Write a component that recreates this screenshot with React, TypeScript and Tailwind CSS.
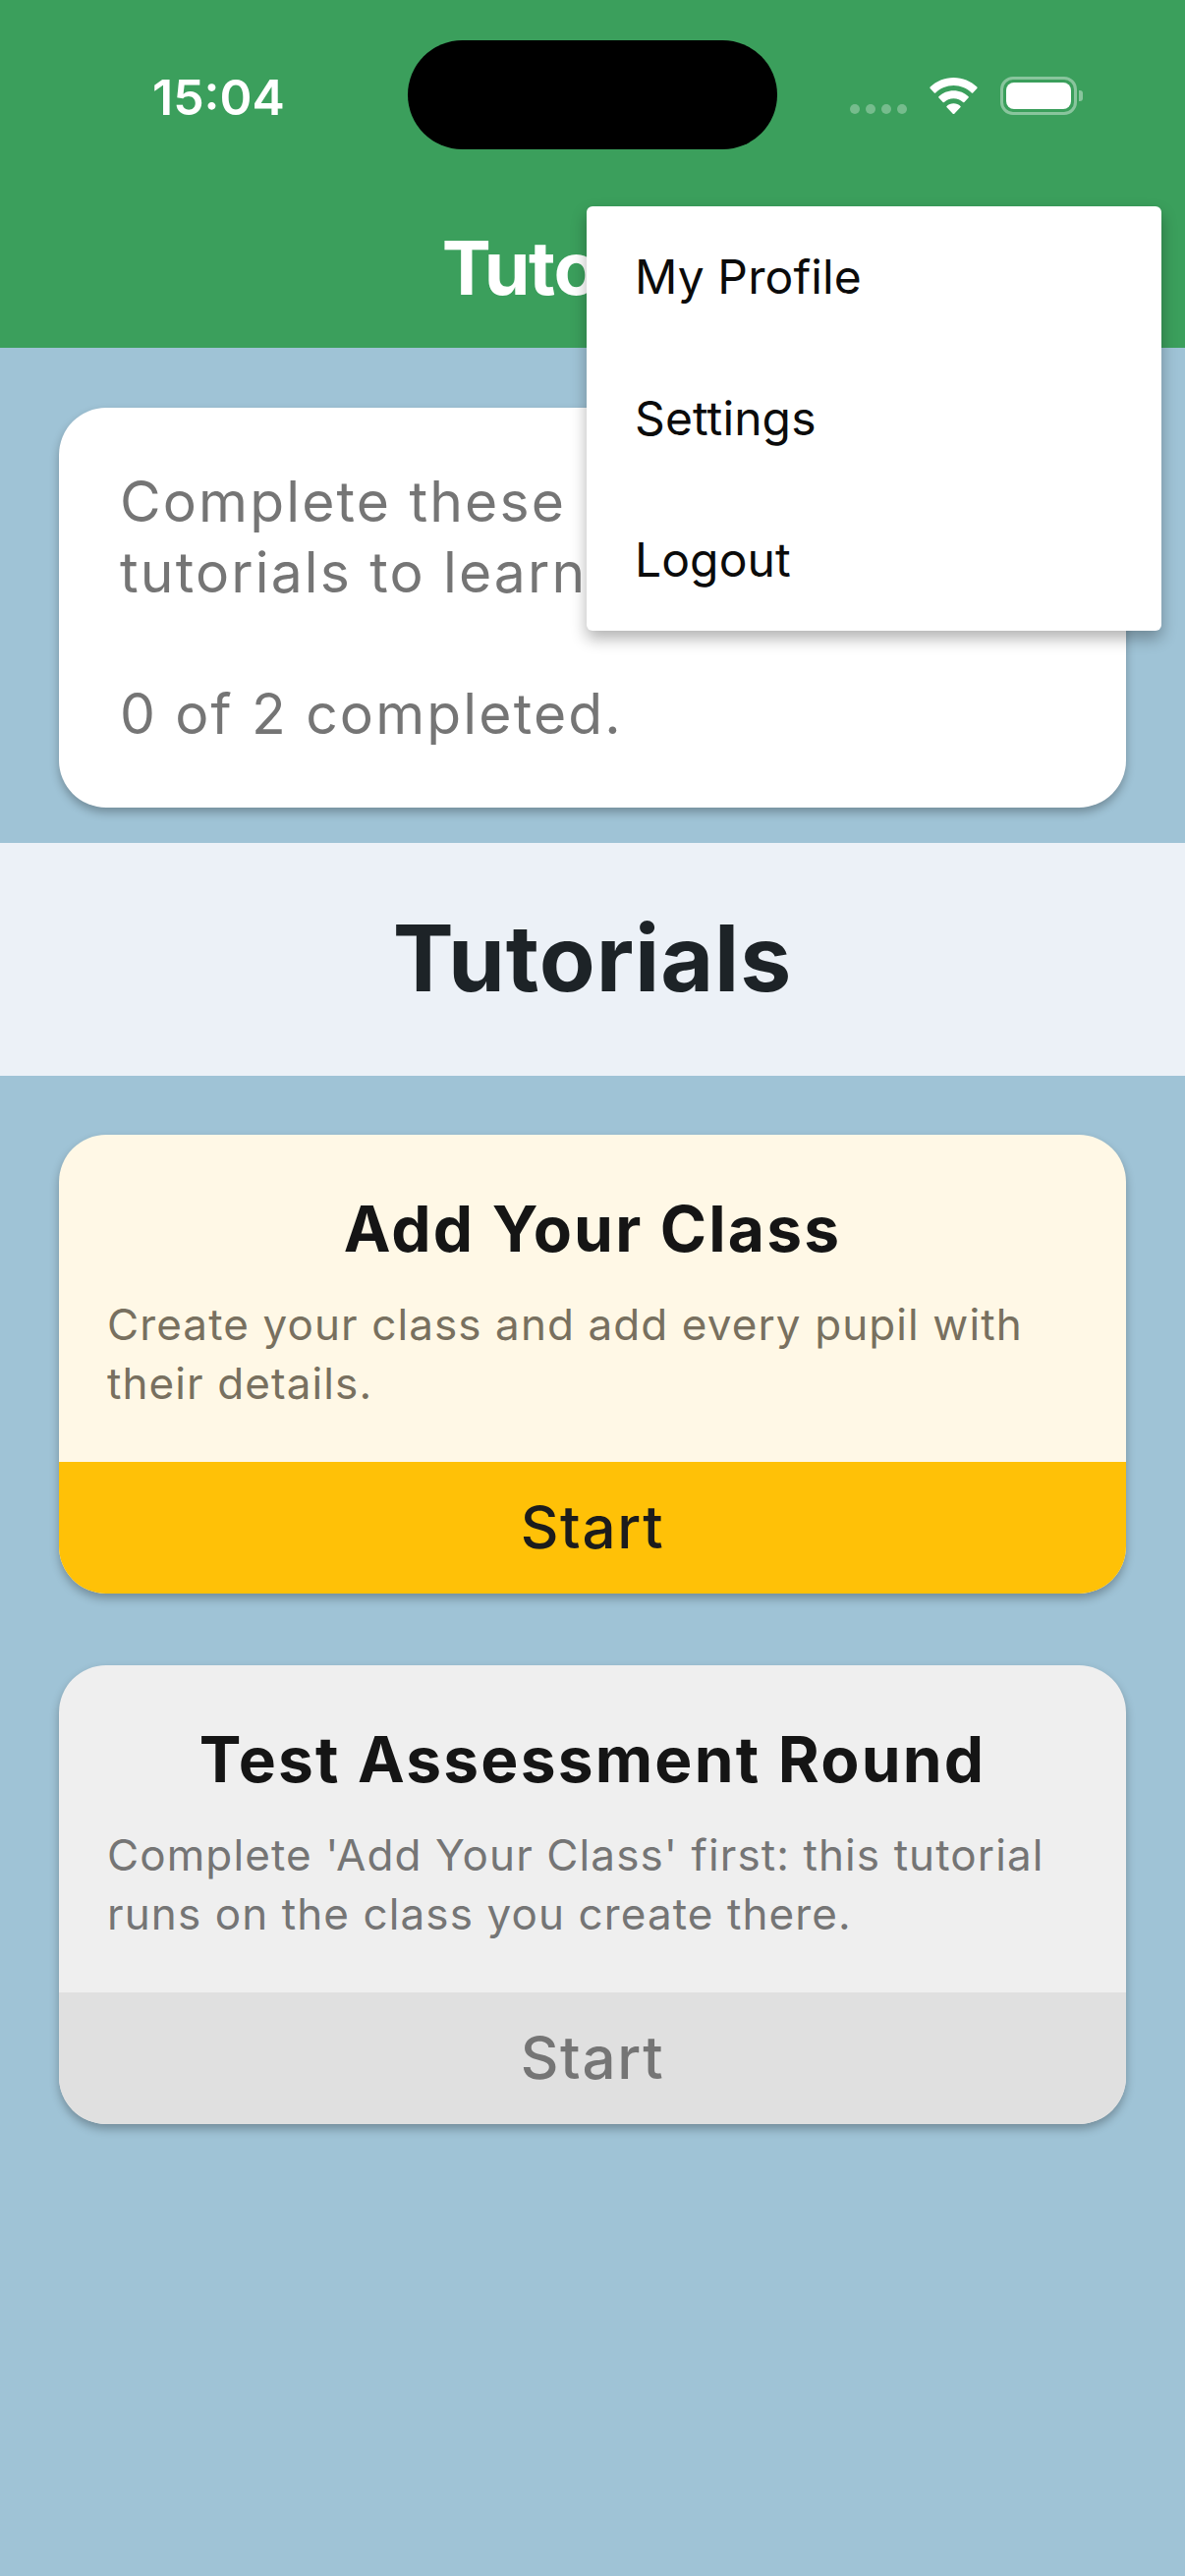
const font = { fontFamily: 'Inter, "Liberation Sans", sans-serif' };

function Card({ title, desc, bg, btnBg, descColor, btnColor }: { title: string; desc: string; bg: string; btnBg: string; descColor: string; btnColor: string }) {
  return (
    <div className={`rounded-[48px] overflow-hidden shadow-[0_5px_10px_rgba(0,0,0,0.28)] ${bg}`}>
      <div className="h-[333px] px-[49px] pt-[60px]">
        <h2 className="text-center text-[64px] leading-[72px] font-bold tracking-[2.2px] text-[#151515]">{title}</h2>
        <p className={`mt-[31px] text-[44px] leading-[60px] tracking-[1.1px] ${descColor}`}>{desc}</p>
      </div>
      <div className={`h-[134px] pb-[2px] flex items-center justify-center text-[60px] font-medium tracking-[1.7px] ${btnBg} ${btnColor}`}>Start</div>
    </div>
  );
}

export default function App() {
  return (
    <div style={font} className="relative w-[1206px] h-[2622px] overflow-hidden bg-[#9fc3d6]">
      <header className="relative h-[354px] bg-[#3b9f5c]">
        <div className="flex items-start h-[210px]">
          <div className="ml-[155px] mt-[72px] w-[260px] text-[50px] leading-[54px] font-semibold text-white">15:04</div>
          <div className="mt-[41px] w-[376px] h-[111px] rounded-[56px] bg-black" />
          <div className="ml-[74px] mt-[78px] flex items-start">
            <div className="flex gap-[6px] mt-[28px]">
              <span className="w-[10px] h-[10px] rounded-full bg-white/30" />
              <span className="w-[10px] h-[10px] rounded-full bg-white/30" />
              <span className="w-[10px] h-[10px] rounded-full bg-white/30" />
              <span className="w-[10px] h-[10px] rounded-full bg-white/30" />
            </div>
            <svg className="ml-[22px] mt-[1px]" width="51" height="37" viewBox="0 0 52 38">
              <path fill="#fff" d="M26 0C16.500 0 7.900 3.700 1.500 9.800a1 1 0 0 0 0 1.400l4.300 4.600a1 1 0 0 0 1.400 0C12.200 11 18.800 8.100 26 8.100s13.800 2.900 18.800 7.700a1 1 0 0 0 1.400 0l4.300-4.600a1 1 0 0 0 0-1.400C44.100 3.700 35.500 0 26 0Z" />
              <path fill="#fff" d="M26 13.500c-6 0-11.500 2.300-15.500 6.200a1 1 0 0 0 0 1.400l4.300 4.500a1 1 0 0 0 1.400 0c2.500-2.300 5.900-3.800 9.800-3.800s7.300 1.500 9.800 3.800a1 1 0 0 0 1.400 0l4.300-4.500a1 1 0 0 0 0-1.400c-4-3.900-9.500-6.200-15.500-6.200Z" />
              <path fill="#fff" d="M26 27c-2.800 0-5.300 1-7.100 2.700a1 1 0 0 0 0 1.400l6.300 6.600a1 1 0 0 0 1.600 0l6.300-6.600a1 1 0 0 0 0-1.400C31.300 28 28.800 27 26 27Z" />
            </svg>
            <div className="ml-[22px] relative w-[78px] h-[39px] rounded-[13px] border-[3px] border-white/40 p-[3px]">
              <div className="w-full h-full rounded-[8px] bg-white" />
              <span className="absolute right-[-9px] top-[11px] w-[4px] h-[11px] rounded-r-[3px] bg-white/40" />
            </div>
          </div>
        </div>
        <h1 className="text-center text-[75px] leading-[80px] font-bold tracking-[-1.4px] text-white mt-[23px] ml-[2px]">Tutorials</h1>
      </header>

      <main className="pt-[61px]">
        <section className="mx-[60px] h-[407px] rounded-[48px] bg-white px-[62px] pt-[60px] text-[57px] leading-[72px] tracking-[2.15px] text-[#757575] shadow-[0_5px_10px_rgba(0,0,0,0.28)]">
          <p>Complete these<br />tutorials to learn</p>
          <p className="mt-[72px]">0 of 2 completed.</p>
        </section>

        <div className="mt-[36px] h-[237px] pb-[1px] bg-[#ecf1f7] flex items-center justify-center text-[93px] font-bold tracking-[0.9px] text-[#1d2327]">Tutorials</div>

        <div className="mx-[60px] mt-[60px] flex flex-col gap-[73px]">
          <Card title="Add Your Class" desc="Create your class and add every pupil with their details." bg="bg-[#fff8e6]" btnBg="bg-[#ffc107]" descColor="text-[#78705f]" btnColor="text-[#1c1c1c]" />
          <Card title="Test Assessment Round" desc="Complete 'Add Your Class' first: this tutorial runs on the class you create there." bg="bg-[#efefef]" btnBg="bg-[#e0e0e0]" descColor="text-[#757575]" btnColor="text-[#757575]" />
        </div>
      </main>

      <div className="absolute left-[597px] top-[210px] w-[585px] h-[432px] rounded-[6px] bg-white shadow-[0_8px_16px_rgba(0,0,0,0.3)] text-[48px] tracking-[0.1px] text-[#0b0b0b]">
        <div className="h-[144px] flex items-center px-[49px]">My Profile</div>
        <div className="h-[144px] flex items-center px-[49px]">Settings</div>
        <div className="h-[144px] flex items-center px-[49px]">Logout</div>
      </div>
    </div>
  );
}
